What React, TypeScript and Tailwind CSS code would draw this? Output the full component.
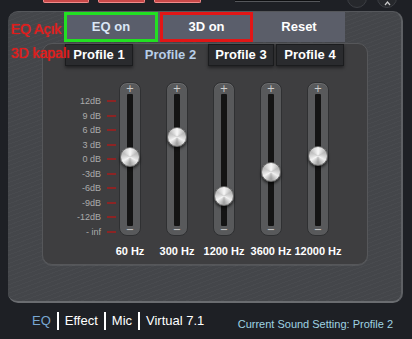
import React from 'react';

const dbLabels = ['12dB', '9 dB', '6 dB', '3 dB', '0 dB', '-3dB', '-6dB', '-9dB', '-12dB', '- inf'];

const bands = [
  { freq: '60 Hz', knob: 75 },
  { freq: '300 Hz', knob: 55 },
  { freq: '1200 Hz', knob: 114 },
  { freq: '3600 Hz', knob: 90 },
  { freq: '12000 Hz', knob: 74 },
];

const profiles = [
  { name: 'Profile 1', w: 'w-[68px]', active: false },
  { name: 'Profile 2', w: 'w-[71px]', active: true },
  { name: 'Profile 3', w: 'w-[66px]', active: false },
  { name: 'Profile 4', w: 'w-[68px]', active: false },
];

const Slider: React.FC<{ freq: string; knob: number }> = ({ freq, knob }) => (
  <div className="flex flex-col items-center w-[22px]">
    <div className="relative w-[22px] h-[154px] rounded-[8px] bg-[#58595b] border border-[#2f3032] shadow-[inset_0_1px_0_rgba(255,255,255,0.12)] flex flex-col items-center">
      <span className="text-[10px] leading-[10px] text-[#cfcfcf] mt-[1px] font-['DejaVu_Sans',sans-serif]">+</span>
      <div className="w-[6px] h-[135px] bg-[#141414] rounded-[1px]" />
      <span className="text-[10px] leading-[10px] text-[#cfcfcf] -mt-[1px] font-['DejaVu_Sans',sans-serif]">−</span>
      <div
        className="absolute left-[0px] w-[20px] h-[20px] rounded-full border border-[#6c6c6c] bg-[conic-gradient(#f4f4f4,#a9a9a9,#eeeeee,#9c9c9c,#f4f4f4,#b0b0b0,#f0f0f0)] shadow-[0_2px_3px_rgba(0,0,0,0.6)]"
        style={{ top: knob - 11 }}
      >
        <div className="w-full h-full rounded-full bg-[radial-gradient(circle_at_50%_35%,rgba(255,255,255,0.55),rgba(255,255,255,0)_60%)]" />
      </div>
    </div>
    <span className="mt-[9px] whitespace-nowrap text-[11px] leading-[12px] font-bold text-white">{freq}</span>
  </div>
);

export default function App() {
  return (
    <div className="w-[412px] h-[339px] overflow-hidden bg-[#1e2025] flex flex-col font-['Liberation_Sans',Arial,sans-serif]">
      {/* top strip, cut off */}
      <div className="h-[11px] flex items-start">
        <div className="ml-[43px] w-[46px] h-[3px] rounded-b-[2px] bg-[#c84848] border border-t-0 border-[#f08a8a]" />
        <div className="ml-[9px] w-[47px] h-[3px] rounded-b-[2px] bg-[#c84848] border border-t-0 border-[#f08a8a]" />
        <div className="ml-[9px] w-[47px] h-[3px] rounded-b-[2px] bg-[#c84848] border border-t-0 border-[#f08a8a]" />
        <div className="ml-[34px] w-[85px] h-[2px] bg-[#0e0f11] border-b border-[#55575b]" />
        <div className="ml-[27px] w-[20px] h-[20px] -mt-[12px] rounded-full bg-[#26282c] border border-[#3c3e43]" />
        <div className="ml-[10px] w-[20px] h-[20px] -mt-[12px] rounded-full bg-[#26282c] border border-[#3c3e43] flex items-end justify-center pb-[1px]">
          <svg width="7" height="5" viewBox="0 0 7 5">
            <path d="M1 4 L3.5 1 L6 4" stroke="#c9c9c9" strokeWidth="1.2" fill="none" />
          </svg>
        </div>
      </div>

      {/* main panel */}
      <div className="relative ml-[8px] w-[395px] h-[292px] rounded-[10px] bg-[#44464a] bg-[repeating-linear-gradient(160deg,rgba(255,255,255,0.025)_0px,rgba(255,255,255,0.025)_1px,transparent_1px,transparent_4px)] border-t border-t-[#55575b] border-r-2 border-b-2 border-r-[#5e6064] border-b-[#6a6c70] flex flex-col">
        <span className="absolute left-[3px] top-[9px] text-[14px] leading-[16px] text-[#e01a1a] [text-shadow:0_0_1px_#ff3030]">EQ Açık</span>
        <span className="absolute left-[3px] top-[33px] text-[14px] leading-[16px] text-[#e01a1a] [text-shadow:0_0_1px_#ff3030] z-10">3D kapalı</span>

        {/* mode buttons */}
        <div className="h-[30px] flex items-start pl-[56px]">
          <div className="flex h-[30px] bg-[#5b5e69]">
            <div className="w-[94px] h-[30px] border-[3px] border-[#22e022] bg-[#5a5e6b] flex items-center justify-center text-[13px] font-bold text-[#dbe6f5]">
              EQ on
            </div>
            <div className="ml-[2px] w-[93px] h-[30px] border-[3px] border-[#e21616] bg-[#5a5e6b] flex items-center justify-center text-[13px] font-bold text-white">
              3D on
            </div>
            <div className="w-[92px] h-[27px] mt-[1px] flex items-center justify-center text-[13px] font-bold text-white">
              Reset
            </div>
          </div>
        </div>

        {/* eq panel */}
        <div className="ml-[34px] mt-[1px] w-[326px] h-[222px] rounded-[10px] bg-[#3e3e40] border border-[#56575a] shadow-[0_1px_0_rgba(255,255,255,0.08)]">
          <div className="flex ml-[22px] gap-[2px]">
            {profiles.map((p) => (
              <div
                key={p.name}
                className={
                  p.active
                    ? `${p.w} h-[22px] flex items-center justify-center text-[13px] font-bold text-[#b8cfe8]`
                    : `${p.w} h-[22px] flex items-center justify-center text-[13px] font-bold text-white bg-[#2a2b2e] border border-[#1b1c1e] shadow-[0_2px_3px_rgba(0,0,0,0.45)]`
                }
              >
                {p.name}
              </div>
            ))}
          </div>

          <div className="flex mt-[16px]">
            <div className="w-[73px] mt-[14px] h-[141px] flex flex-col justify-between">
              {dbLabels.map((l) => (
                <div key={l} className="h-[10px] flex items-center justify-end">
                  <span className="text-[9px] leading-[10px] text-[#ababab]">{l}</span>
                  <div className="ml-[6px] w-[9px] h-[2px] bg-[#8c2424]" />
                </div>
              ))}
            </div>
            <div className="ml-[3px] flex gap-[25px]">
              {bands.map((b) => (
                <Slider key={b.freq} freq={b.freq} knob={b.knob} />
              ))}
            </div>
          </div>
        </div>
      </div>

      {/* bottom nav */}
      <div className="flex-1 flex items-center pl-[32px] pr-[19px]">
        <span className="text-[13px] text-[#79a7d2]">EQ</span>
        <div className="mx-[6px] w-[2px] h-[18px] bg-white" />
        <span className="text-[13px] text-white">Effect</span>
        <div className="mx-[6px] w-[2px] h-[18px] bg-white" />
        <span className="text-[13px] text-white">Mic</span>
        <div className="mx-[6px] w-[2px] h-[18px] bg-white" />
        <span className="text-[13px] text-white">Virtual 7.1</span>
        <span className="ml-auto mt-[6px] text-[11px] text-[#9fd3e3]">Current Sound Setting: Profile 2</span>
      </div>
    </div>
  );
}
